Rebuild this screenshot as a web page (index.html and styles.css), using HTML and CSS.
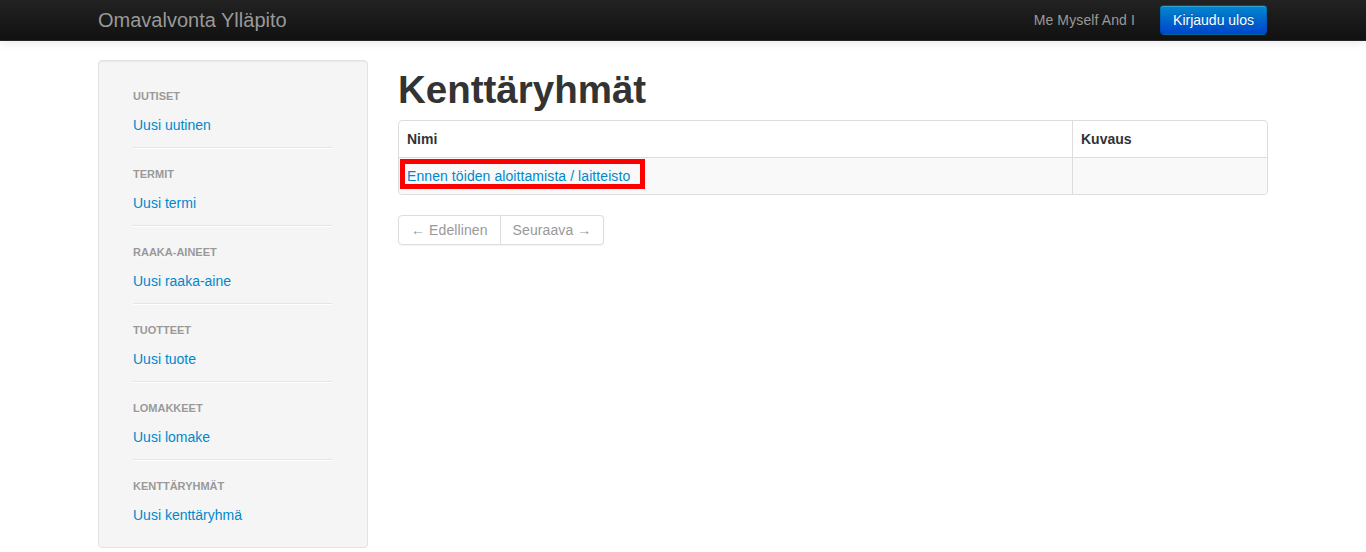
FILE: index.html
```html
<!DOCTYPE html>
<html lang="fi">
<head>
<meta charset="utf-8">
<title>Omavalvonta Ylläpito</title>
<link rel="stylesheet" href="styles.css">
</head>
<body>
<header class="navbar">
  <div class="container nav-inner">
    <a class="brand" href="#">Omavalvonta Ylläpito</a>
    <div class="nav-right">
      <span class="user">Me Myself And I</span>
      <a class="btn-primary" href="#">Kirjaudu ulos</a>
    </div>
  </div>
</header>
<div class="container main">
  <aside class="well">
    <div class="nav-section">
      <div class="nav-header">Uutiset</div>
      <a class="nav-link" href="#">Uusi uutinen</a>
    </div>
    <div class="divider"></div>
    <div class="nav-section">
      <div class="nav-header">Termit</div>
      <a class="nav-link" href="#">Uusi termi</a>
    </div>
    <div class="divider"></div>
    <div class="nav-section">
      <div class="nav-header">Raaka-aineet</div>
      <a class="nav-link" href="#">Uusi raaka-aine</a>
    </div>
    <div class="divider"></div>
    <div class="nav-section">
      <div class="nav-header">Tuotteet</div>
      <a class="nav-link" href="#">Uusi tuote</a>
    </div>
    <div class="divider"></div>
    <div class="nav-section">
      <div class="nav-header">Lomakkeet</div>
      <a class="nav-link" href="#">Uusi lomake</a>
    </div>
    <div class="divider"></div>
    <div class="nav-section">
      <div class="nav-header">Kenttäryhmät</div>
      <a class="nav-link" href="#">Uusi kenttäryhmä</a>
    </div>
  </aside>
  <main class="content">
    <h1 class="title">Kenttäryhmät</h1>
    <table class="table">
      <thead>
        <tr><th class="col-name">Nimi</th><th class="col-desc">Kuvaus</th></tr>
      </thead>
      <tbody>
        <tr class="striped"><td class="col-name"><a class="row-link highlight" href="#">Ennen töiden aloittamista / laitteisto</a></td><td class="col-desc"></td></tr>
      </tbody>
    </table>
    <ul class="pagination">
      <li class="page first"><span>← Edellinen</span></li>
      <li class="page last"><span>Seuraava →</span></li>
    </ul>
  </main>
</div>
</body>
</html>
```
FILE: styles.css
```css
html, body {
  margin: 0;
  padding: 0;
  background: #fff;
}
body {
  font-family: "Liberation Sans", Arial, sans-serif;
  font-size: 14px;
  line-height: 20px;
  color: #333;
}
a { text-decoration: none; }

.container {
  width: 1170px;
  margin: 0 auto;
}

.navbar {
  height: 40px;
  background: linear-gradient(to bottom, #222222, #111111);
  border-bottom: 1px solid #252525;
  box-shadow: 0 1px 10px rgba(0,0,0,0.1);
  position: relative;
}
.nav-inner {
  display: flex;
  align-items: center;
  justify-content: space-between;
  height: 40px;
}
.brand {
  font-size: 20px;
  line-height: 20px;
  color: #999;
  padding: 10px 0;
}
.nav-right {
  display: flex;
  align-items: center;
}
.user {
  color: #999;
  font-size: 14px;
  margin-right: 25px;
  letter-spacing: 0.12px;
}
.btn-primary {
  display: inline-block;
  color: #fff;
  padding: 4px 12px;
  line-height: 20px;
  border-radius: 4px;
  background: linear-gradient(to bottom, #0088cc, #0044cc);
  border: 1px solid #0044cc;
  border-color: rgba(0,0,0,0.1) rgba(0,0,0,0.1) rgba(0,0,0,0.25);
  text-shadow: 0 -1px 0 rgba(0,0,0,0.25);
  box-shadow: inset 0 1px 0 rgba(255,255,255,0.2), 0 1px 2px rgba(0,0,0,0.05);
  height: 20px;
  margin-right: 1px;
}

.main {
  display: flex;
  gap: 30px;
  padding-top: 19px;
  align-items: flex-start;
}

.well {
  width: 270px;
  box-sizing: border-box;
  background: #f5f5f5;
  border: 1px solid #e3e3e3;
  border-radius: 4px;
  box-shadow: inset 0 1px 1px rgba(0,0,0,0.05);
  padding: 25px 35px 22px 34px;
  display: flex;
  flex-direction: column;
}
.nav-section {
  display: flex;
  flex-direction: column;
}
.nav-header {
  font-size: 11px;
  font-weight: bold;
  line-height: 20px;
  color: #999;
  text-transform: uppercase;
  text-shadow: 0 1px 0 rgba(255,255,255,0.5);
}
.nav-link {
  color: #0088cc;
  margin-top: 9px;
  line-height: 20px;
}
.divider {
  height: 1px;
  background: #e5e5e5;
  border-bottom: 1px solid #fff;
  margin: 12px 0 15px;
}

.content {
  width: 870px;
}
.title {
  font-size: 38.5px;
  line-height: 40px;
  font-weight: bold;
  margin: 10px 0;
  color: #333;
}

.table {
  width: 100%;
  border-collapse: separate;
  border-spacing: 0;
  border: 1px solid #ddd;
  border-radius: 4px;
  table-layout: fixed;
  margin-bottom: 20px;
}
.table th, .table td {
  padding: 8px;
  line-height: 20px;
  text-align: left;
  vertical-align: top;
}
.table th { font-weight: bold; }
.table td { border-top: 1px solid #ddd; }
.table .col-desc {
  width: 178px;
  border-left: 1px solid #ddd;
}
.table .striped td { background: #f9f9f9; }
.table .striped td:first-child { border-bottom-left-radius: 4px; }
.table .striped td:last-child { border-bottom-right-radius: 4px; }
.row-link {
  color: #0088cc;
  letter-spacing: 0.08px;
}
.highlight {
  display: inline-block;
  position: relative;
  vertical-align: top;
}
.highlight::after {
  content: "";
  position: absolute;
  top: -7px;
  bottom: -3px;
  left: -7px;
  right: -15px;
  border: 5px solid #ff0000;
  pointer-events: none;
}

.pagination {
  list-style: none;
  margin: 0;
  padding: 0;
  display: inline-flex;
  border-radius: 4px;
  box-shadow: 0 1px 2px rgba(0,0,0,0.05);
}
.page > span {
  display: block;
  padding: 4px 12px;
  line-height: 20px;
  color: #999;
  background: #fff;
  border: 1px solid #ddd;
  letter-spacing: 0.1px;
}
.page.first > span {
  border-radius: 4px 0 0 4px;
}
.page.last > span {
  border-left: 0;
  border-radius: 0 4px 4px 0;
}
```
